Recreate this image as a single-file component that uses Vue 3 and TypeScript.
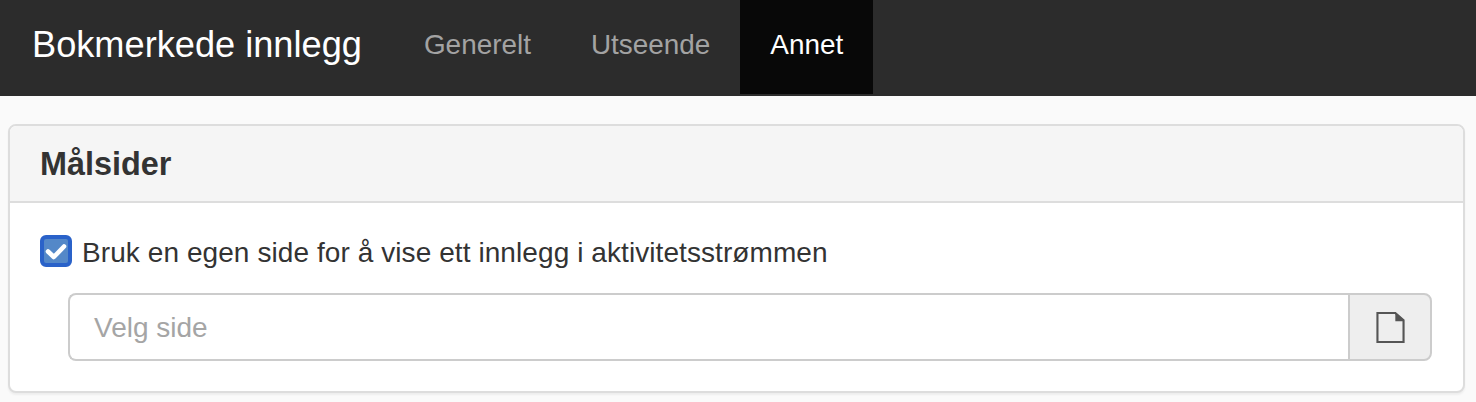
<script setup lang="ts">
const tabs = [
  { label: 'Generelt', active: false },
  { label: 'Utseende', active: false },
  { label: 'Annet', active: true },
]
</script>

<template>
  <div class="page">
    <nav class="navbar">
      <span class="brand">Bokmerkede innlegg</span>
      <ul class="tabs">
        <li v-for="t in tabs" :key="t.label" class="tab" :class="{ active: t.active }">{{ t.label }}</li>
      </ul>
    </nav>
    <section class="panel">
      <header class="panel-head"><h3>Målsider</h3></header>
      <div class="panel-body">
        <label class="check">
          <span class="box">
            <svg viewBox="0 0 24 24" width="24" height="24" aria-hidden="true">
              <path d="M4 12.5 L9.8 18 L20 7.5" fill="none" stroke="#fff" stroke-width="4.6" stroke-linecap="round" stroke-linejoin="round" />
            </svg>
          </span>
          <span class="check-label">Bruk en egen side for å vise ett innlegg i aktivitetsstrømmen</span>
        </label>
        <div class="group">
          <div class="input">Velg side</div>
          <div class="addon">
            <svg viewBox="0 0 30 34" width="29" height="33" aria-hidden="true">
              <path d="M1.5 2 H20 L28.5 9.5 V32 H1.5 Z" fill="none" stroke="#555" stroke-width="2.2" />
              <path d="M20 1.5 L29 9.5 V10.5 H20 Z" fill="#555" />
            </svg>
          </div>
        </div>
      </div>
    </section>
  </div>
</template>

<style>
html, body { margin: 0; background: #fafafa; }
</style>

<style scoped>
.page {
  width: 1476px;
  height: 402px;
  overflow: hidden;
  background: #fafafa;
  font-family: "Liberation Sans", Arial, sans-serif;
  color: #333;
}
.navbar {
  display: flex;
  height: 96px;
  box-sizing: border-box;
  border-bottom: 2px solid #2c2c2c;
  background: #2c2c2c;
}
.brand {
  padding-left: 32px;
  margin-right: 32px;
  font-size: 36.2px;
  line-height: 90px;
  color: #fff;
}
.tabs {
  display: flex;
  list-style: none;
  margin: 0;
  padding: 0;
}
.tab {
  padding: 0 30px;
  font-size: 27.9px;
  line-height: 90px;
  color: #a3a3a3;
}
.tab.active {
  background: #080808;
  color: #fff;
}
.panel {
  margin: 28px 11px 0 8px;
  border: 2px solid #ddd;
  border-radius: 8px;
  background: #fff;
  box-shadow: 0 2px 2px rgba(0, 0, 0, 0.05);
  height: 269px;
  box-sizing: border-box;
  overflow: hidden;
}
.panel-head {
  height: 77px;
  box-sizing: border-box;
  border-bottom: 2px solid #ddd;
  background: #f5f5f5;
  padding-left: 30px;
}
.panel-head h3 {
  margin: 0;
  font-size: 32.4px;
  line-height: 77px;
  font-weight: 700;
  color: #333;
}
.panel-body {
  padding: 31px 31px 0 30px;
}
.check {
  display: flex;
  align-items: center;
  gap: 10px;
  height: 34px;
  font-size: 28px;
  letter-spacing: 0.08px;
}
.check-label {
  line-height: 34px;
  padding-top: 4px;
}
.box {
  display: flex;
  align-items: center;
  justify-content: center;
  width: 32px;
  height: 32px;
  box-sizing: border-box;
  border: 4px solid #2a62c9;
  border-radius: 6px;
  background: #5488c8;
}
.group {
  display: flex;
  height: 68px;
  margin: 25px 0 0 28px;
}
.input {
  flex: 1;
  box-sizing: border-box;
  border: 2px solid #ccc;
  border-right: 0;
  border-radius: 8px 0 0 8px;
  background: #fff;
  padding-left: 24px;
  font-size: 28px;
  line-height: 66px;
  color: #a5a5a5;
}
.addon {
  display: flex;
  align-items: center;
  justify-content: center;
  width: 84px;
  box-sizing: border-box;
  border: 2px solid #ccc;
  border-radius: 0 8px 8px 0;
  background: #eee;
}
</style>
